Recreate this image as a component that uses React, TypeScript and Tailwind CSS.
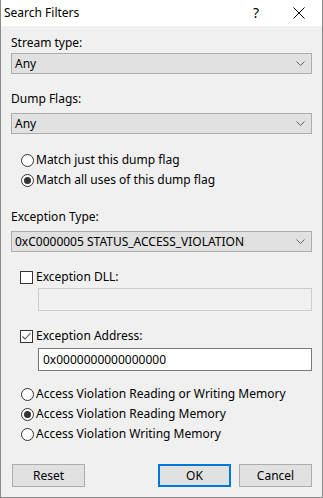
import React from 'react'

const font = { fontFamily: '"Segoe UI", "Noto Sans", sans-serif' }

const Chevron = () => (
  <svg width="9" height="6" viewBox="0 0 9 6" className="shrink-0">
    <path d="M0.5 0.5 L4.5 4.5 L8.5 0.5" fill="none" stroke="#606060" strokeWidth="1" />
  </svg>
)

const Combo = ({ value, className }: { value: string; className?: string }) => (
  <div
    className={`flex h-[21px] items-center justify-between border border-[#adadad] bg-[#e1e1e1] pl-[3px] pr-[6px] text-[12px] text-black ${className ?? ''}`}
  >
    <span>{value}</span>
    <Chevron />
  </div>
)

const Radio = ({ label, checked }: { label: string; checked?: boolean }) => (
  <div className="flex h-[20px] items-center">
    <div className="flex h-[13px] w-[13px] items-center justify-center rounded-full border border-[#333333] bg-white">
      {checked && <div className="h-[7px] w-[7px] rounded-full bg-[#333333]" />}
    </div>
    <span className="ml-[2px] text-[12px] text-black">{label}</span>
  </div>
)

const Check = ({ label, checked }: { label: string; checked?: boolean }) => (
  <div className="flex h-[16px] items-center">
    <div className="flex h-[13px] w-[13px] items-center justify-center border border-[#333333] bg-white">
      {checked && (
        <svg width="11" height="11" viewBox="0 0 11 11">
          <path d="M1.5 5.5 L4 8 L9.5 2" fill="none" stroke="#555555" strokeWidth="1.1" />
        </svg>
      )}
    </div>
    <span className="ml-[3px] text-[12px] text-black">{label}</span>
  </div>
)

export default function App() {
  return (
    <div
      style={font}
      className="flex h-[498px] w-[323px] flex-col border-x border-b border-[#8a8a8a] bg-[#f0f0f0] text-[12px] leading-[16px] text-black"
    >
      <div className="flex h-[26px] items-center bg-white">
        <span className="ml-[3px] flex-1 text-[12px]">Search Filters</span>
        <span className="w-[20px] text-center text-[14px]">?</span>
        <svg width="12" height="12" viewBox="0 0 12 12" className="ml-[27px] mr-[17px]">
          <path d="M0.5 0.5 L11.5 11.5 M11.5 0.5 L0.5 11.5" stroke="#000" strokeWidth="1" />
        </svg>
      </div>

      <div className="flex flex-col px-[10px]">
        <span className="mt-[9px]">Stream type:</span>
        <Combo value="Any" className="mt-[2px]" />

        <span className="mt-[17px]">Dump Flags:</span>
        <Combo value="Any" className="mt-[6px]" />

        <div className="mt-[16px] flex flex-col pl-[10px]">
          <Radio label="Match just this dump flag" />
          <Radio label="Match all uses of this dump flag" checked />
        </div>

        <span className="mt-[19px]">Exception Type:</span>
        <Combo value="0xC0000005 STATUS_ACCESS_VIOLATION" className="mt-[6px]" />

        <div className="mt-[17px] flex flex-col pl-[9px]">
          <Check label="Exception DLL:" />
          <div className="ml-[18px] mt-[3px] h-[23px] border border-[#cccccc] bg-[#f0f0f0]" />

          <div className="mt-[17px]">
            <Check label="Exception Address:" checked />
          </div>
          <div className="ml-[18px] mt-[4px] flex h-[23px] items-center border border-[#7a7a7a] bg-white pl-[4px]">
            0x0000000000000000
          </div>
        </div>

        <div className="mt-[13px] flex flex-col pl-[10px]">
          <Radio label="Access Violation Reading or Writing Memory" />
          <Radio label="Access Violation Reading Memory" checked />
          <Radio label="Access Violation Writing Memory" />
        </div>

        <div className="mt-[20px] flex items-center">
          <div className="ml-[1px] flex h-[23px] w-[73px] items-center justify-center border border-[#adadad] bg-[#e1e1e1]">
            Reset
          </div>
          <div className="ml-auto flex h-[23px] w-[73px] items-center justify-center border-2 border-[#0078d7] bg-[#e1e1e1]">
            OK
          </div>
          <div className="ml-[8px] flex h-[23px] w-[73px] items-center justify-center border border-[#adadad] bg-[#e1e1e1]">
            Cancel
          </div>
        </div>
      </div>
    </div>
  )
}
